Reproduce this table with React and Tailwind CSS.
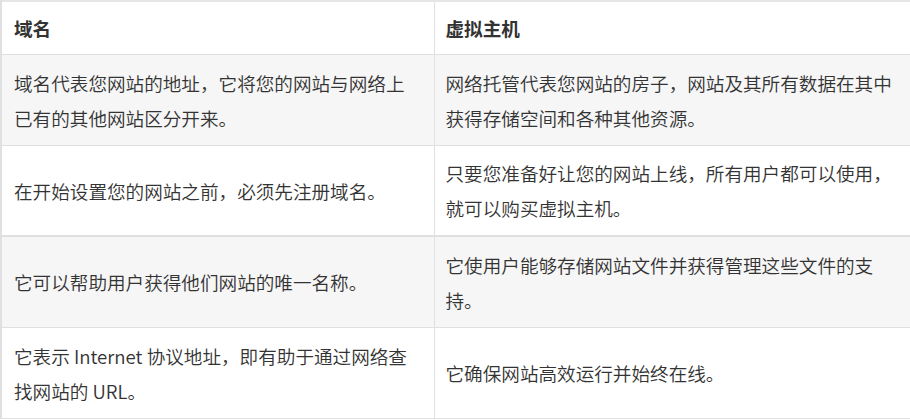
const rows = [
  {
    domain: '域名代表您网站的地址，它将您的网站与网络上已有的其他网站区分开来。',
    host: '网络托管代表您网站的房子，网站及其所有数据在其中获得存储空间和各种其他资源。',
  },
  {
    domain: '在开始设置您的网站之前，必须先注册域名。',
    host: '只要您准备好让您的网站上线，所有用户都可以使用，就可以购买虚拟主机。',
  },
  {
    domain: '它可以帮助用户获得他们网站的唯一名称。',
    host: '它使用户能够存储网站文件并获得管理这些文件的支持。',
  },
  {
    domain: '它表示 Internet 协议地址，即有助于通过网络查找网站的 URL。',
    host: '它确保网站高效运行并始终在线。',
  },
];

export default function App() {
  return (
    <div className="w-[910px] h-[420px] overflow-hidden bg-white text-[#333] [font-family:'Noto_Sans_CJK_SC','Microsoft_YaHei',sans-serif]">
      <table className="w-[911px] border-collapse table-fixed text-[18.6px] leading-[35px]">
        <colgroup>
          <col className="w-[433px]" />
          <col />
        </colgroup>
        <thead>
          <tr className="h-[53px] border-t-2 border-[#e6e6e6]">
            <th className="text-left font-bold px-[12px] align-middle border-l-2 border-r border-b border-[#e0e0e0]">域名</th>
            <th className="text-left font-bold px-[11px] align-middle border-b border-[#e0e0e0]">虚拟主机</th>
          </tr>
        </thead>
        <tbody className="font-[350]">
          {rows.map((r, i) => (
            <tr key={i} className={`h-[91px] ${i % 2 === 0 ? 'bg-[#f6f6f6]' : 'bg-white'}`}>
              <td className={`px-[12px] align-middle border-l-2 border-r border-[#e0e0e0] ${i === 1 ? 'border-b-2' : 'border-b'}`}>{r.domain}</td>
              <td className={`pl-[11px] pr-[14px] align-middle border-[#e0e0e0] ${i === 1 ? 'border-b-2' : 'border-b'}`}>{r.host}</td>
            </tr>
          ))}
        </tbody>
      </table>
    </div>
  );
}
